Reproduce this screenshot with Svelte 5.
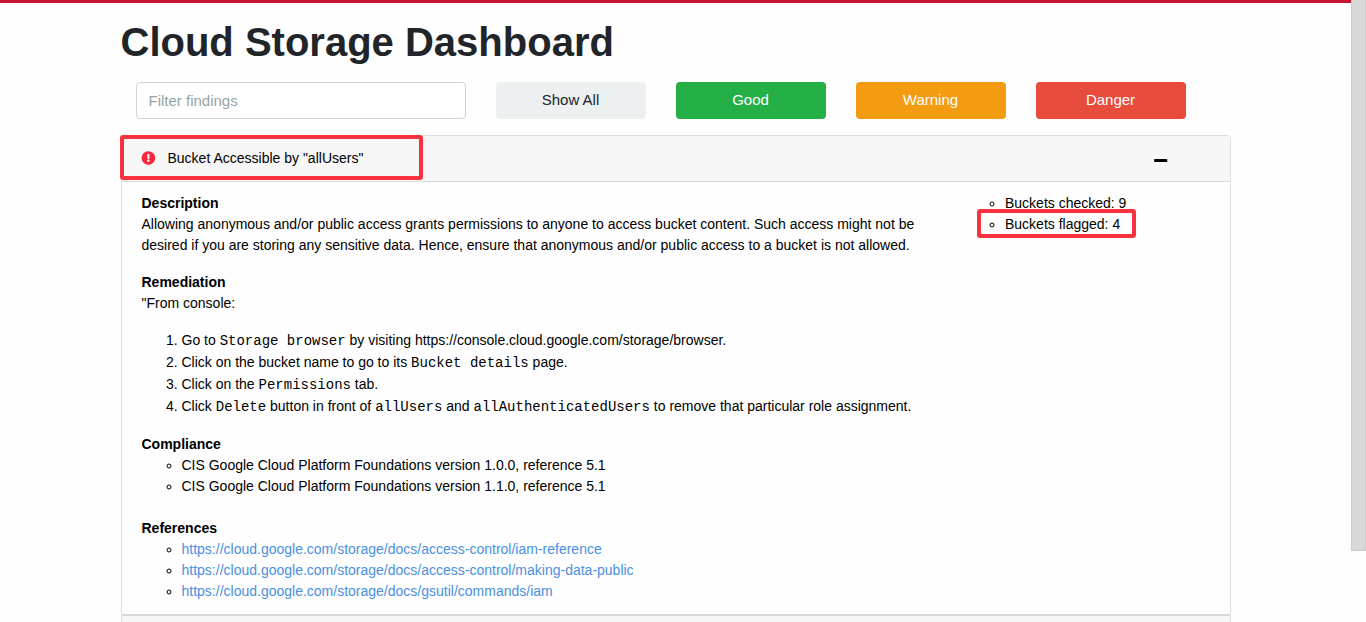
<script>
  const filters = [
    { label: 'Show All', kind: 'all' },
    { label: 'Good', kind: 'good' },
    { label: 'Warning', kind: 'warning' },
    { label: 'Danger', kind: 'danger' }
  ];
  const compliance = [
    'CIS Google Cloud Platform Foundations version 1.0.0, reference 5.1',
    'CIS Google Cloud Platform Foundations version 1.1.0, reference 5.1'
  ];
  const references = [
    'https://cloud.google.com/storage/docs/access-control/iam-reference',
    'https://cloud.google.com/storage/docs/access-control/making-data-public',
    'https://cloud.google.com/storage/docs/gsutil/commands/iam'
  ];
</script>

<div class="window">
  <div class="page">
    <main>
      <h1>Cloud Storage Dashboard</h1>
      <div class="filters">
        <input type="text" placeholder="Filter findings" />
        {#each filters as f}
          <button class={f.kind}>{f.label}</button>
        {/each}
      </div>

      <section class="card">
        <header>
          <svg class="alert" viewBox="-14 0 548.57 512" width="15" height="14">
            <path fill="#f5283c" d="M504 256c0 137-111 248-248 248S8 393 8 256 119 8 256 8s248 111 248 248z" />
            <path fill="#f7f7f7" d="M212 108h88l-12 180h-64z" />
            <circle cx="256" cy="358" r="46" fill="#f7f7f7" />
          </svg>
          <span>Bucket Accessible by "allUsers"</span>
          <svg class="minus" viewBox="0 0 14 3" width="14" height="3">
            <rect x="0.100" y="0" width="13.200" height="3" rx="0.800" />
          </svg>
        </header>
        <div class="body">
          <div class="details">
            <h2>Description</h2>
            <p>
              Allowing anonymous and/or public access grants permissions to anyone to access bucket content. Such access might not be<br />
              desired if you are storing any sensitive data. Hence, ensure that anonymous and/or public access to a bucket is not allowed.
            </p>
            <h2>Remediation</h2>
            <p>"From console:</p>
            <ol>
              <li>Go to <samp>Storage browser</samp> by visiting https://console.cloud.google.com/storage/browser.</li>
              <li>Click on the bucket name to go to its <samp>Bucket details</samp> page.</li>
              <li>Click on the <samp>Permissions</samp> tab.</li>
              <li>Click <samp>Delete</samp> button in front of <samp>allUsers</samp> and <samp>allAuthenticatedUsers</samp> to remove that particular role assignment.</li>
            </ol>
            <h2>Compliance</h2>
            <ul class="compliance">
              {#each compliance as c}<li>{c}</li>{/each}
            </ul>
            <h2>References</h2>
            <ul>
              {#each references as r}<li><a href={r}>{r}</a></li>{/each}
            </ul>
          </div>
          <ul class="stats">
            <li>Buckets checked: 9</li>
            <li>Buckets flagged: 4</li>
          </ul>
        </div>
        <div class="next"></div>
      </section>
    </main>
  </div>
  <div class="scrollbar"><div class="thumb"></div></div>
  <div class="mark title-mark"></div>
  <div class="mark flagged-mark"></div>
</div>

<style>
  :global(body) { margin: 0; }
  .window, .window * { box-sizing: border-box; }
  .window {
    position: relative;
    display: flex;
    height: 622px;
    overflow: hidden;
    background: #fefefe;
    font-family: "Liberation Sans", Arial, sans-serif;
    font-size: 14px;
    line-height: 21px;
    color: #000;
  }
  .page { flex: 1; border-top: 3px solid #c8142f; }
  main { width: 1110px; margin: 0 auto; padding-top: 15px; }
  h1 { margin: 0; font-size: 40px; line-height: 48px; font-weight: 700; color: #212529; }
  .filters { display: flex; gap: 30px; padding: 16px 15px 0; }
  input {
    width: 330px;
    height: 37px;
    padding: 0 12px;
    border: 1px solid #ced4da;
    border-radius: 4px;
    background: #fff;
    font: 15px "Liberation Sans", Arial, sans-serif;
    outline: none;
  }
  input::placeholder { color: #95a5a6; opacity: 1; }
  button {
    width: 150px;
    height: 37px;
    padding: 0 0 2px;
    border: 0;
    border-radius: 4px;
    font: 15px "Liberation Sans", Arial, sans-serif;
    color: #fff;
  }
  .all { background: #ecf0f1; color: #212529; }
  .good { background: #24b047; }
  .warning { background: #f39c12; }
  .danger { background: #e74c3c; }
  .card { margin-top: 16px; border: 1px solid #dfdfdf; border-radius: 4px 4px 0 0; background: #fefefe; }
  header {
    display: flex;
    align-items: center;
    height: 46px;
    padding: 0 61.5px 0 19.5px;
    border-bottom: 1px solid #d9d9d9;
    border-radius: 3px 3px 0 0;
    background: #f7f7f7;
  }
  .alert { margin-bottom: 1px; }
  header span { flex: 1; margin-left: 11.5px; }
  .minus { margin-top: 4px; }
  .body { display: flex; height: 432px; padding: 11px 20px 0; }
  .details { width: 823.5px; white-space: nowrap; }
  h2 { margin: 0; font-size: 14px; line-height: 21px; font-weight: 700; }
  p { margin: 0 0 16px; }
  ol { margin: 0 0 16px; padding-left: 40px; }
  ol li { height: 22px; }
  samp { font-family: "Liberation Mono", monospace; font-size: 14px; }
  ul { margin: 0; padding-left: 40px; list-style: circle; }
  .compliance { margin-bottom: 21px; }
  a { color: #4a90e2; text-decoration: none; }
  .next { height: 40px; border-top: 2px solid #d9d9d9; background: #f7f7f7; }
  .scrollbar { width: 15px; }
  .thumb { height: 551px; border: 1px solid #cdcdcd; border-top: 0; background: #d9d9d9; }
  .mark { position: absolute; border: 4px solid #f9323f; border-radius: 3px; }
  .title-mark { left: 120px; top: 135px; width: 303px; height: 45px; }
  .flagged-mark { left: 977px; top: 209px; width: 159px; height: 29px; }
</style>
